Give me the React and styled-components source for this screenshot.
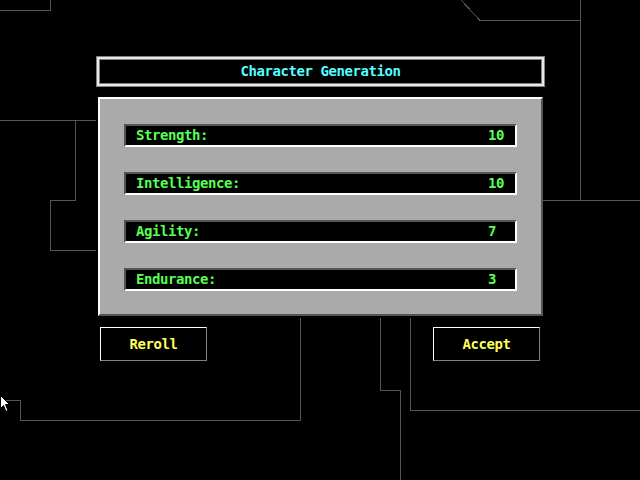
import React from 'react';
import styled, { createGlobalStyle } from 'styled-components';

const GlobalStyle = createGlobalStyle`
  html, body {
    margin: 0;
    padding: 0;
    background: #000;
  }
`;

const Screen = styled.div`
  position: relative;
  width: 640px;
  height: 480px;
  box-sizing: border-box;
  padding: 56px 0 0 96px;
  overflow: hidden;
  background: #000;
  font-family: 'DejaVu Sans Mono', 'Liberation Mono', monospace;
  font-size: 14px;
  font-weight: bold;
  letter-spacing: -0.43px;
`;

const Backdrop = styled.svg`
  position: absolute;
  inset: 0;
  pointer-events: none;
`;

const Dialog = styled.div`
  position: relative;
  width: 449px;
  display: flex;
  flex-direction: column;
`;

const TitleBar = styled.div`
  height: 31px;
  box-sizing: border-box;
  border: 1px solid #808080;
  box-shadow: inset 0 0 0 2px #e8e8e8, inset 0 0 0 3px #808080;
  background: #000;
  color: #55ffff;
  display: flex;
  align-items: center;
  justify-content: center;
  line-height: 23px;
`;

const Panel = styled.div`
  margin: 10px 0 0 2px;
  width: 445px;
  box-sizing: border-box;
  padding: 25px 24px 23px;
  background: #aaaaaa;
  border: 2px solid;
  border-color: #fff #555 #555 #fff;
  display: flex;
  flex-direction: column;
  gap: 25px;
`;

const Field = styled.div`
  height: 23px;
  box-sizing: border-box;
  border: 2px solid;
  border-color: #555 #fff #fff #555;
  background: #000;
  color: #55ff55;
  display: grid;
  grid-template-columns: 1fr 16px;
  align-items: center;
  padding: 0 11px 0 10px;
  line-height: 19px;
`;

const ButtonRow = styled.div`
  margin-top: 11px;
  padding: 0 5px 0 4px;
  display: flex;
  justify-content: space-between;
`;

const Button = styled.div`
  width: 107px;
  height: 34px;
  box-sizing: border-box;
  border: 1px solid;
  border-color: #fff #808080 #808080 #fff;
  color: #ffff55;
  display: flex;
  align-items: center;
  justify-content: center;
  line-height: 32px;
`;

const stats = [
  { label: 'Strength:', value: 10 },
  { label: 'Intelligence:', value: 10 },
  { label: 'Agility:', value: 7 },
  { label: 'Endurance:', value: 3 },
];

// circuit-like traces drawn behind the dialog
const traces = [
  '0,10.5 50.5,10.5 50.5,0',
  '461,0 480,20.5 580.5,20.5',
  '580.5,0 580.5,200.5',
  '543,200.5 640,200.5',
  '0,120.5 96,120.5',
  '75.5,120.5 75.5,200.5 50.5,200.5 50.5,250.5 96,250.5',
  '300.5,318 300.5,420.5 20.5,420.5 20.5,400.5 0,400.5',
  '380.5,318 380.5,390.5 400.5,390.5 400.5,480',
  '410.5,318 410.5,410.5 640,410.5',
];

export default function App() {
  return (
    <>
      <GlobalStyle />
      <Screen>
        <Backdrop width="640" height="480" viewBox="0 0 640 480">
          {traces.map(p => (
            <polyline key={p} points={p} fill="none" stroke="#555" strokeWidth="1" shapeRendering="crispEdges" />
          ))}
          <path
            d="M0.5 395.5 L0.5 408.5 L3.5 405.5 L6 411.5 L8 410.5 L5.5 404.5 L9.5 404.5 Z"
            fill="#fff"
            stroke="#000"
            strokeWidth="1"
          />
        </Backdrop>
        <Dialog>
          <TitleBar>Character Generation</TitleBar>
          <Panel>
            {stats.map(s => (
              <Field key={s.label}>
                <span>{s.label}</span>
                <span>{s.value}</span>
              </Field>
            ))}
          </Panel>
          <ButtonRow>
            <Button>Reroll</Button>
            <Button>Accept</Button>
          </ButtonRow>
        </Dialog>
      </Screen>
    </>
  );
}
